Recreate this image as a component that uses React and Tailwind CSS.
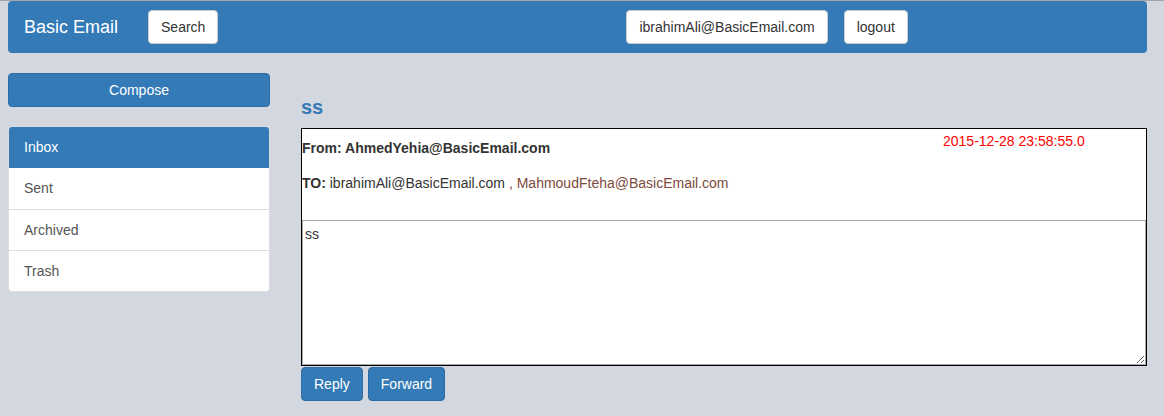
export default function App() {
  const folders = ['Sent', 'Archived', 'Trash']

  return (
    <div className="min-h-[416px] bg-[#d3d7df] font-['Liberation_Sans',Arial,sans-serif] text-[14px] text-[#333]">
      <div className="h-px bg-[#a6a6a6]" />

      <nav className="mx-2 flex h-[52px] w-[1139px] items-center rounded bg-[#337ab7]">
        <span className="ml-4 text-[18px] text-white">Basic Email</span>
        <button className="ml-[30px] h-[34px] rounded border border-[#ccc] bg-white px-3 text-[14px] text-[#333]">
          Search
        </button>
        <button className="ml-[408px] h-[34px] rounded border border-[#ccc] bg-white px-3 text-[14px] text-[#333]">
          ibrahimAli@BasicEmail.com
        </button>
        <button className="ml-4 h-[34px] rounded border border-[#ccc] bg-white px-3 text-[14px] text-[#333]">
          logout
        </button>
      </nav>

      <div className="mt-[20px] flex">
        <aside className="ml-2 w-[262px]">
          <button className="h-[34px] w-full rounded border border-[#2e6da4] bg-[#337ab7] text-[14px] text-white">
            Compose
          </button>
          <div className="mt-[19px] overflow-hidden rounded border border-[#ddd] bg-white">
            <div className="flex h-[41px] items-center bg-[#337ab7] px-[15px] text-white">Inbox</div>
            {folders.map((f, i) => (
              <div
                key={f}
                className={`flex h-[41px] items-center px-[15px] text-[#555] ${i > 0 ? 'border-t border-[#ddd]' : ''}`}
              >
                {f}
              </div>
            ))}
          </div>
        </aside>

        <main className="ml-[31px] w-[846px]">
          <h3 className="mt-[23px] text-[20px] font-bold leading-[22px] text-[#337ab7]">ss</h3>

          <div className="mt-[10px] border border-black bg-white">
            <div className="relative h-[91px]">
              <p className="pt-[9px] font-bold">From: AhmedYehia@BasicEmail.com</p>
              <span className="absolute left-[641px] top-[2px] text-[#f00]">2015-12-28 23:58:55.0</span>
              <p className="mt-[14px]">
                <b>TO:</b> ibrahimAli@BasicEmail.com <span className="text-[#7d4a3c]">, MahmoudFteha@BasicEmail.com</span>
              </p>
            </div>
            <textarea
              defaultValue="ss"
              className="block h-[145px] w-full border border-[#a9a9a9] px-[2px] py-[3px] text-[14px] text-[#333] outline-none"
            />
          </div>

          <div className="mt-px flex gap-[5px]">
            <button className="h-[34px] rounded border border-[#2e6da4] bg-[#337ab7] px-3 text-white">Reply</button>
            <button className="h-[34px] rounded border border-[#2e6da4] bg-[#337ab7] px-3 text-white">Forward</button>
          </div>
        </main>
      </div>
    </div>
  )
}
